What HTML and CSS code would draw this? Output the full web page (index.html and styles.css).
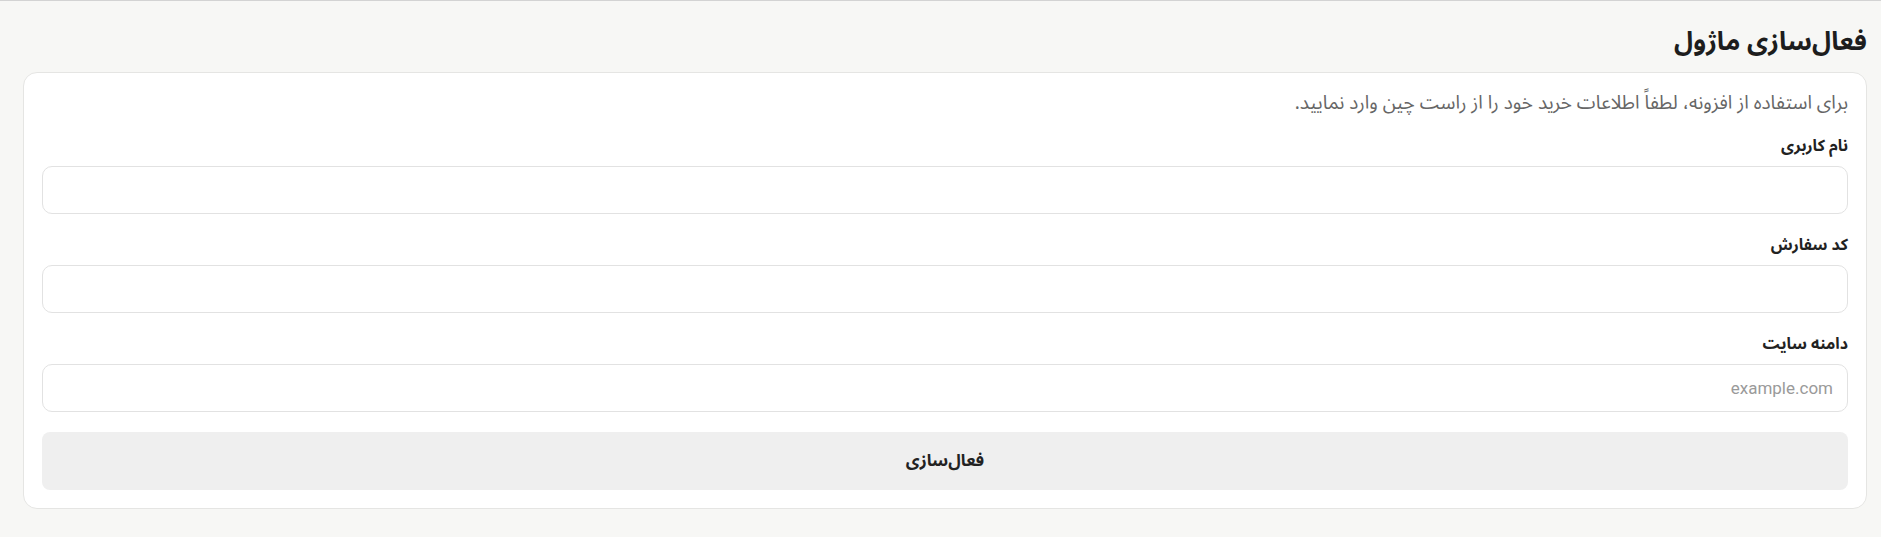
FILE: index.html
```html
<!DOCTYPE html>
<html lang="fa" dir="rtl">

<head>
  <meta charset="UTF-8">
  <meta name="viewport" content="width=device-width, initial-scale=1.0">
  <title>فعال‌سازی ماژول</title>
  <link rel="stylesheet" href="styles.css">
</head>

<body>
  <div class="activation">
    <h1 class="activation__title">فعال‌سازی ماژول</h1>
    <form class="activation__card">
      <p class="activation__hint">برای استفاده از افزونه، لطفاً اطلاعات خرید خود را از راست چین وارد نمایید.</p>

      <div class="activation__field">
        <label class="activation__label" for="username">نام کاربری</label>
        <input class="activation__input" id="username" type="text">
      </div>

      <div class="activation__field">
        <label class="activation__label" for="order">کد سفارش</label>
        <input class="activation__input" id="order" type="text">
      </div>

      <div class="activation__field">
        <label class="activation__label" for="domain">دامنه سایت</label>
        <input class="activation__input" id="domain" type="text" placeholder="example.com">
      </div>

      <button class="activation__button" type="button">فعال‌سازی</button>
    </form>
  </div>
</body>

</html>
```

FILE: styles.css
```css
body {
  margin: 0;
  background-color: #f7f7f5;
  border-top: 1px solid #d3d3d3;
  font-family: "Noto Sans Arabic", "DejaVu Sans", "Noto Sans", sans-serif;
  color: #222;
}

.activation {
  padding: 25px 14px 0 23px;
}

.activation__title {
  margin: 0 0 14px;
  font-size: 26px;
  line-height: 32px;
  font-weight: 700;
  color: #1d1d1d;
}

.activation__card {
  background-color: #fff;
  border: 1px solid #e5e5e3;
  border-radius: 14px;
  padding: 18px;
}

.activation__hint {
  margin: 0 0 20px;
  font-size: 19px;
  line-height: 24px;
  color: #666;
}

.activation__field {
  margin-bottom: 20px;
}

.activation__label {
  display: block;
  margin-bottom: 9px;
  font-size: 16px;
  line-height: 22px;
  font-weight: 700;
  color: #222;
}

.activation__input {
  display: block;
  box-sizing: border-box;
  width: 100%;
  height: 48px;
  margin: 0;
  padding: 0 14px;
  border: 1px solid #e2e2e2;
  border-radius: 10px;
  background-color: #fff;
  font-family: Roboto, "Liberation Sans", sans-serif;
  font-size: 17px;
  direction: rtl;
}

.activation__input::placeholder {
  color: #9a9a9a;
}

.activation__button {
  display: block;
  width: 100%;
  height: 58px;
  border: 0;
  border-radius: 8px;
  background-color: #efefef;
  font-family: inherit;
  font-size: 17px;
  font-weight: 700;
  color: #222;
}
```
